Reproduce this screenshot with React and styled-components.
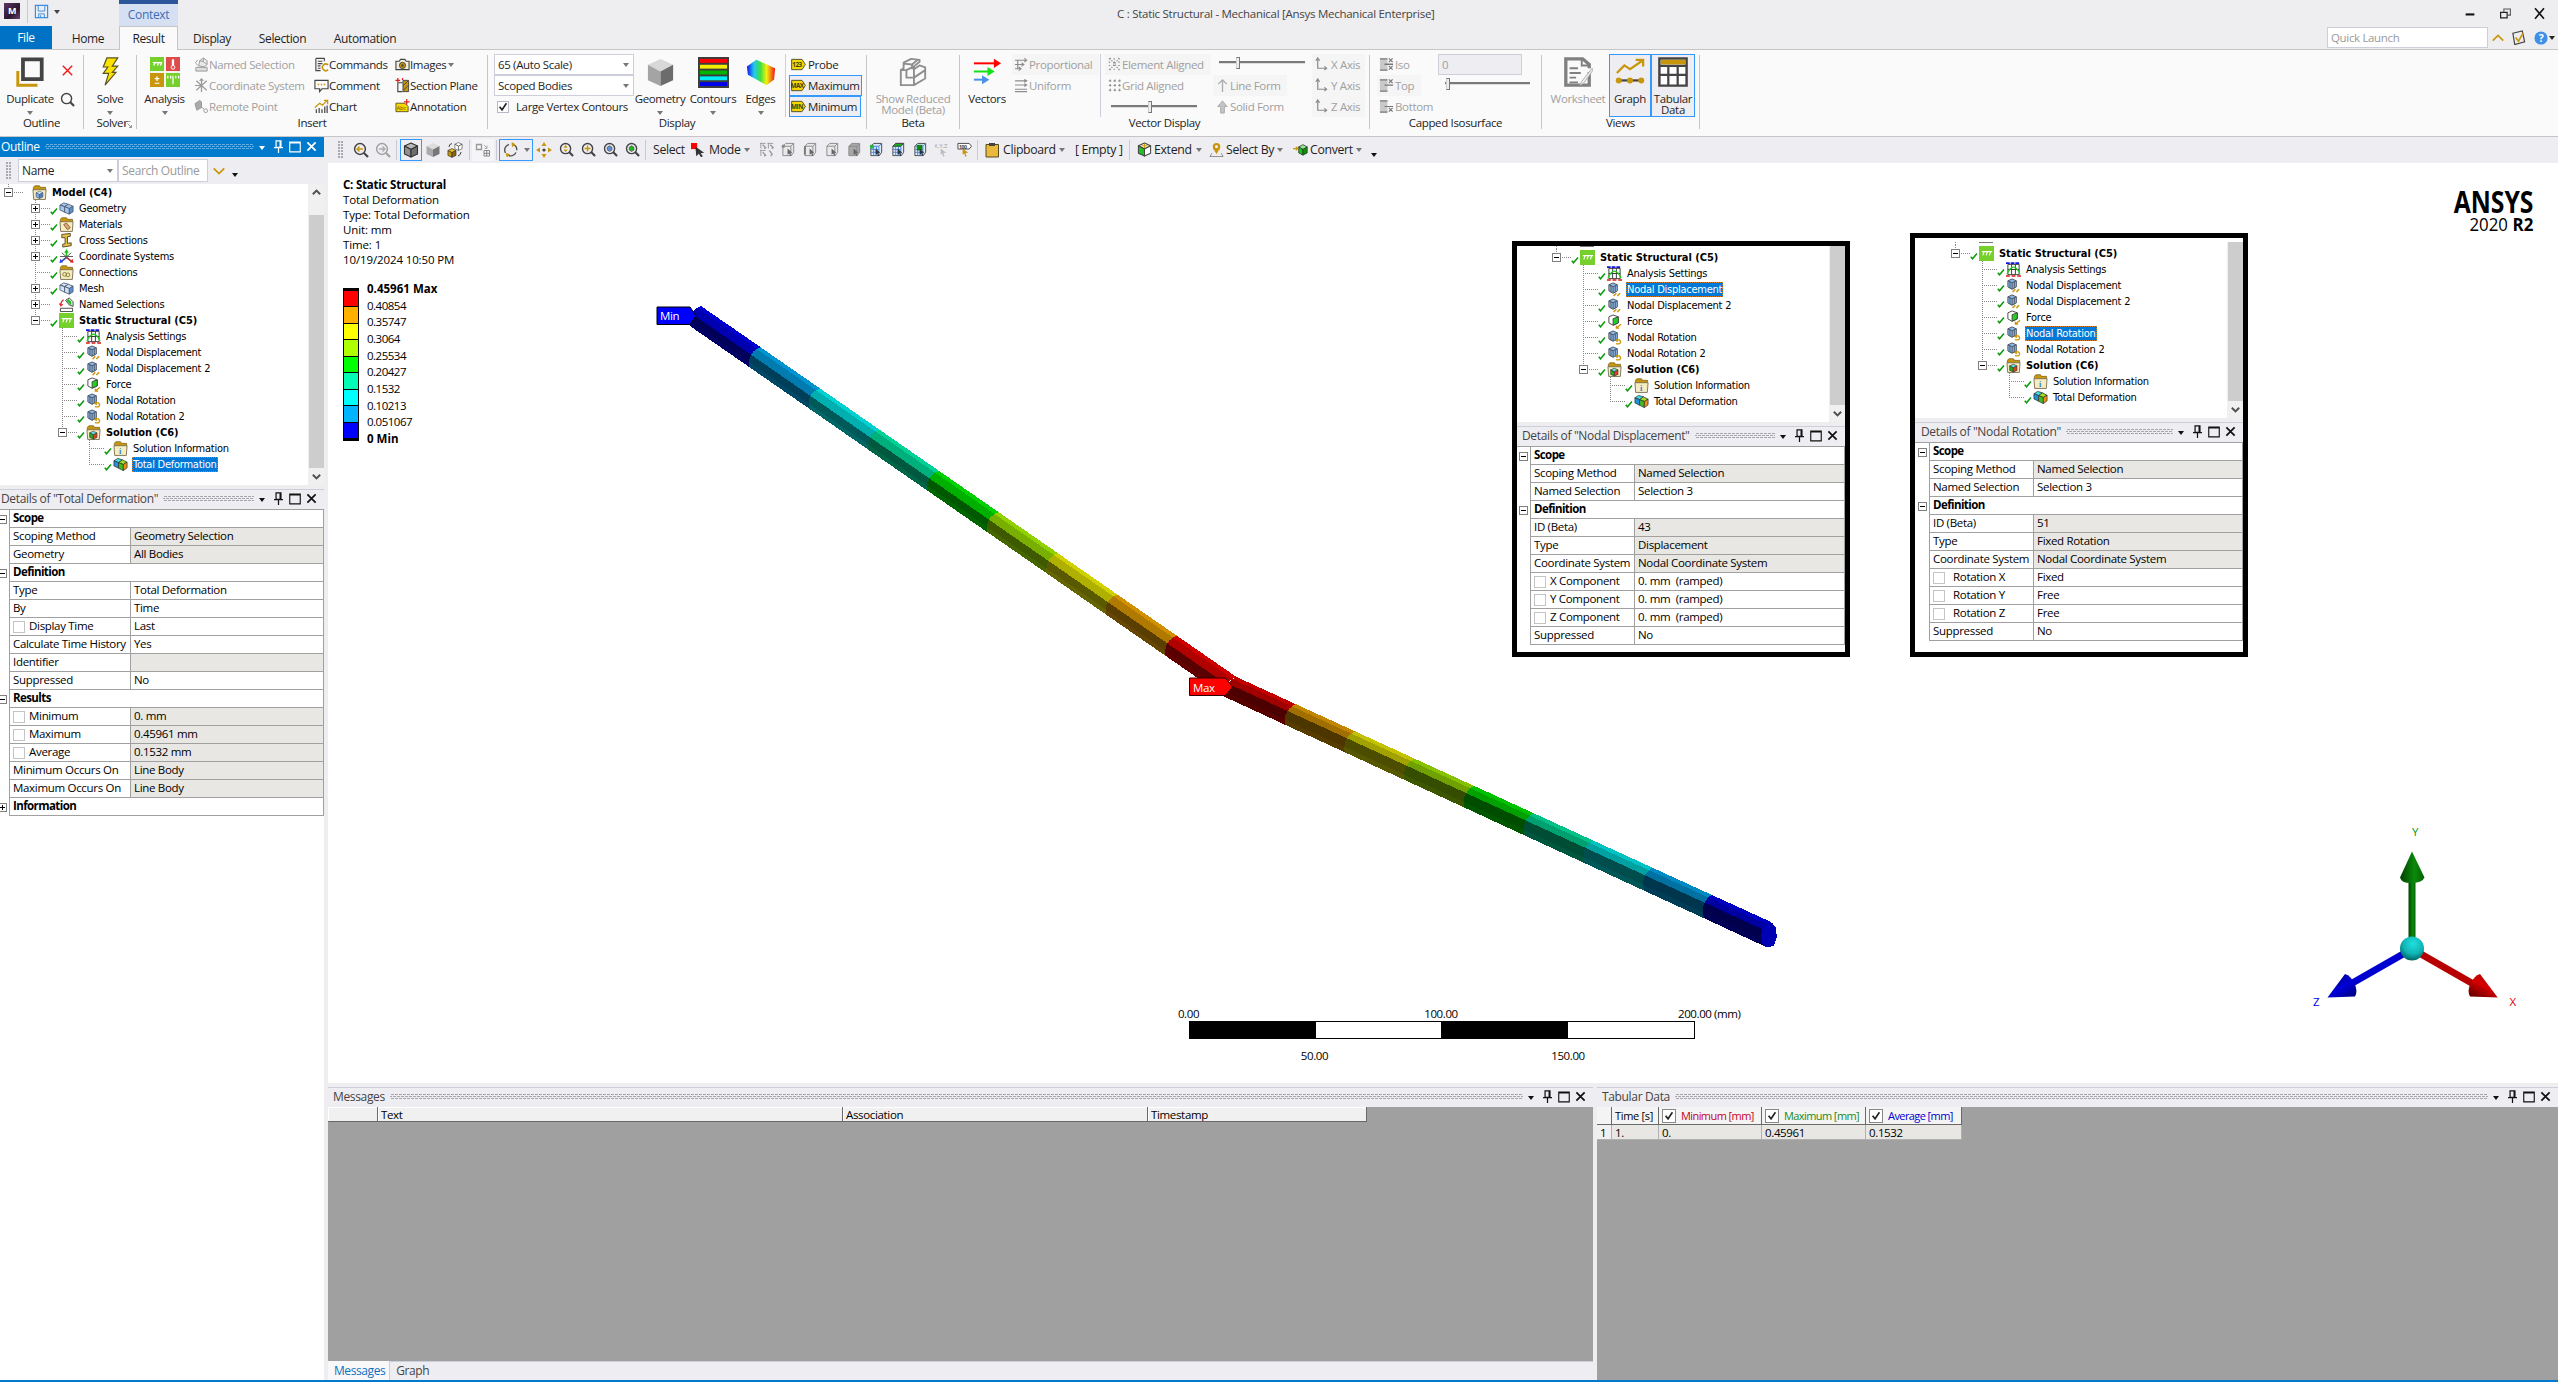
import React from "react";
import styled, { createGlobalStyle, css } from "styled-components";

/* ---------- base ---------- */
const Global = createGlobalStyle`
  *, *::before, *::after { box-sizing: border-box; }
  html, body { margin: 0; padding: 0; overflow: hidden; }
  body { font-family: "Open Sans", "Noto Sans", sans-serif; font-size: 11.5px; letter-spacing: -0.34px; color: #1e1e1e; background: #eeeef2; }
  svg { display: block; flex: none; }
`;
const G = "#c8960c";
const D = "#444444";
const L = "#8c8c8c";

const Window = styled.div`
  width: 2558px; height: 1382px; display: flex; flex-direction: column;
  background: #eeeef0; border-bottom: 2px solid #007acc; overflow: hidden; white-space: nowrap;
`;

/* ---------- icons ---------- */
const I = ({ s = 16, v = 16, children }) => (
  <svg width={s} height={s} viewBox={`0 0 ${v} ${v}`} fill="none">{children}</svg>
);
const Cube = ({ top = "#ddd", left = "#aaa", right = "#777", line = "none" }) => (
  <g stroke={line} strokeWidth="1.1" strokeLinejoin="round">
    <path d="M8 1 14.5 4 8 7.5 1.5 4z" fill={top} />
    <path d="M1.5 4 8 7.5V15L1.5 12z" fill={left} />
    <path d="M14.5 4 8 7.5V15l6.5-3z" fill={right} />
  </g>
);
const Lens = ({ c = D, children }) => (
  <>
    <circle cx="7" cy="7" r="5.4" stroke={c} strokeWidth="1.5" />
    <path d="m11 11 4 4" stroke={c} strokeWidth="2.2" />
    {children}
  </>
);
const Folder = ({ children }) => (
  <>
    <path d="M1.5 2.5 3 .8h5l1 1.7h5.5V6h-13z" fill="#c8960c" stroke="#7a6020" strokeWidth=".8" />
    <path d="M1 5h14l-.8 10.4H1.8z" fill="#f5ecc0" stroke="#7d7456" />
    {children}
  </>
);
const Mesh = ({ c }) => (
  <g stroke="#4a5a6e" strokeWidth=".9" fill={c} strokeLinejoin="round">
    <path d="M1 4.5 5 2l5 1.5L6 6z" /><path d="M1 4.5 6 6v6L1 9.5z" /><path d="M6 6l4-2.5 5 2L11 8z" />
    <path d="M6 6l5 2v6l-5-2z" /><path d="M15 5.5 11 8v6l4-2.5z" fill="#5f8fd0" />
  </g>
);
const NodeCube = () => (
  <g stroke="#46525f" strokeWidth="1">
    <path d="M2 3 6.5 1 11 3v6.5L6.500 12 2 9.500z" fill="#8fb8ea" /><path d="M2 3l4.500 2L11 3M6.500 5v7M4.200 4v7M8.800 4v7" />
  </g>
);
const SelCube = ({ face }) => (
  <>
    <path d="M2 4.500 5 1.500h8.500V11L11 14.500H2z" fill={face === "all" ? "#a8a8a8" : "#e9e9ec"} stroke="#8a8a8a" />
    <path d="M2 4.500h8.500v10M10.500 4.500l3-3" stroke="#8a8a8a" />
    {face === "dot" && <circle cx="2.500" cy="4.500" r="1.800" fill="#8a8a8a" />}
    {face === "edge" && <path d="M2 4.500v9" stroke="#777" strokeWidth="2" />}
    <path d="m7 7 5 4.500-2.200.2 1.200 2.600-1.200.5-1-2.600L7 13.500z" fill="#666" />
  </>
);
const SelMesh = ({ face }) => (
  <>
    <path d="M2 4.500 5 1.500h8.500V11L11 14.500H2z" fill="#dce9fb" stroke={D} />
    <path d="M2 4.500h8.500v10M10.500 4.500l3-3M2 8h8.500M2 11h8.500M5 4.500v10M8 4.500v10" stroke="#4a86d8" />
    {face === "node" && <rect x="1" y="3" width="4" height="4" fill="#2fae4e" />}
    {face === "face" && <path d="M2 4.500 5 1.500h8.500l-3 3z" fill="#12b512" stroke={D} />}
    {face === "body" && <rect x="4" y="3" width="6" height="6" fill="#128512" />}
    <path d="m7 7 5 4.500-2.200.2 1.200 2.600-1.200.5-1-2.600L7 13.500z" fill="#333" />
  </>
);
const Axes = () => (
  <path d="M4 2v10h9M2 4l2-3 2 3M11 10l2.500 2-2.500 2" stroke={L} strokeWidth="1.300" />
);
const Iso = ({ a, b }) => (
  <>
    <rect x="1" y="2" width="8" height="12" fill="#c9c9c9" />
    <path d="M1 2h8M1 14h8" stroke="#777" strokeWidth="1.500" />
    {a && <path d="m10.500 1.500 4 4m0-4-4 4M6 7.500h9" stroke="#777" strokeWidth="1.300" />}
    {b && <path d="m10.500 9.500 4 4m0-4-4 4M6 8h9" stroke="#777" strokeWidth="1.300" />}
  </>
);
const Tag = ({ text }) => (
  <>
    <path d="M.7 2.500h11l3.600 5.500-3.600 5.500H.7z" fill="#f5d800" stroke="#4a4a30" />
    <text x="6.400" y="10.800" fontSize="6.800" fontWeight="700" textAnchor="middle" fill="#3c3c14" letterSpacing="-.5">{text}</text>
  </>
);
const ICON = {
  save: <><path d="M1.500 1.500h13v13h-13z" stroke="#3c8ee0" strokeWidth="1.300" /><path d="M4.500 1.500v6h7v-6M5 14.500v-4h6v4M7 12v2" stroke="#3c8ee0" /></>,
  x: <path d="m3 3 10 10M13 3 3 13" stroke="#f01818" strokeWidth="1.500" />,
  lens: <Lens />,
  lensBack: <Lens><path d="M10 7H4m2.500-2.500L4 7l2.500 2.500" stroke={G} strokeWidth="1.400" /></Lens>,
  lensFwd: <Lens c="#a0a0a0"><path d="M4 7h6M7.500 4.500 10 7 7.500 9.500" stroke="#aaa" strokeWidth="1.400" /></Lens>,
  lensUD: <Lens><path d="M7 3 4.800 6h4.400zM7 11 4.800 8h4.400z" fill={G} /></Lens>,
  lensPlus: <Lens><path d="M7 3.800v6.400M3.800 7h6.400" stroke={G} strokeWidth="1.600" /></Lens>,
  lensCube: <Lens><path d="M4.500 5.500 7 4l2.500 1.500v3L7 10 4.500 8.500z" fill="#5e8fd8" stroke={D} strokeWidth=".7" /></Lens>,
  lensGreen: <Lens><path d="M4.500 5.500 7 4l2.500 1.500v3L7 10 4.500 8.500z" fill="#1cb81c" stroke={D} strokeWidth=".7" /></Lens>,
  named: <><path d="M2 11h12v4H2z" stroke="#999" fill="#ddd" /><path d="M5 9.500 6 4l4-3 4 3v4l-3 2.500zM10 1v4l4 3M6 4l4 1" stroke="#999" fill="#e8e8e8" /><path d="M4 3 1.500 6 4 9" stroke="#999" /></>,
  namedC: <><path d="M1.500 12h13v3.500h-13z" stroke={D} fill="#fff" /><path d="M7 3.500 11 1l4 4v5l-4-1.500z" stroke={D} fill="#e4f4e4" /><path d="m8 4 5 5V5L10 2z" fill="#22c022" /><path d="M5 3Q1.500 5 2 9m-1.500-2L2 9.500l2-2" stroke="#e02020" strokeWidth="1.200" /></>,
  coord: <path d="M8 1v14M1 8h6M2.500 3l11 10M13.500 3l-11 10M6 3l2-2 2 2" stroke="#999" strokeWidth="1.300" />,
  coordC: <><path d="M8 8V3" stroke="#18c018" strokeWidth="1.800" /><path d="M8 0 5.500 4h5z" fill="#18c018" /><path d="m8 9-5 4" stroke="#2040f0" strokeWidth="1.800" /><path d="m.5 15 1-4.500 3 3.500z" fill="#2040f0" /><path d="m8 9 5 4" stroke="#f02020" strokeWidth="1.800" /><path d="m15.500 15-1-4.500-3 3.500z" fill="#f02020" /><path d="m3 4 10 9M13 4 3 13M1 8h14" stroke="#555" /></>,
  remote: <><path d="M1 5 6 1.500 8 3v6l-5 3z" fill="#aaa" stroke="#999" /><circle cx="12.500" cy="12.500" r="2" stroke="#999" /><path d="m7 8 4 3" stroke="#999" /></>,
  commands: <><path d="M2 1.500h9v3M2 1.500V14.500h5M4 4.500h5M4 7h5M4 9.500h3M4 12h3" stroke={D} strokeWidth="1.200" /><path d="M15 8.500a3.500 3.500 0 1 0 0 5" stroke={G} strokeWidth="1.700" /></>,
  comment: <><path d="M1 2.500h14v9H8.500L6 14.500v-3H1z" stroke={D} strokeWidth="1.200" /><path d="M4 7h1.500M7.300 7h1.500M10.500 7H12" stroke={G} strokeWidth="1.500" /></>,
  chart: <><path d="M2.500 15v-4M5.500 15V9.500M8.500 15v-4M11.500 15V8M14 15V7" stroke={D} strokeWidth="1.300" /><path d="m1 9 5-4.500 3 2L13.500 2M10.500 1.500h4v4" stroke={G} strokeWidth="1.400" /></>,
  images: <><path d="M1 4.500h3.500l1.500-2h4.500l1.500 2H15v9H1z" stroke={D} strokeWidth="1.200" fill="#f3efe0" /><circle cx="8" cy="9" r="3.300" fill={G} stroke={D} /><circle cx="8" cy="9" r="1.300" fill={D} /></>,
  section: <><path d="M3 5v9.500h5M3 5h5" stroke={D} strokeWidth="1.200" /><path d="M8.500 2.500h6v12h-6z" fill={G} stroke={D} /><path d="m9 8 5-5M9 13l5-5" stroke={D} /><path d="M3 0v5M.5 2.500h5M8 0v2" stroke="#e02020" strokeWidth="1.300" /></>,
  annotation: <><path d="M1 4.500h9.500L14 8v5.500H1z" fill="#f5d800" stroke="#5e5620" /><text x="1.500" y="12" fontSize="6.500" fill="#6a5a00">Abc</text><path d="M12.500 0v6M9.500 3h6" stroke="#e02020" strokeWidth="1.300" /></>,
  probe: <Tag text="123" />, max: <Tag text="MAX" />, min: <Tag text="MIN" />,
  prop: <><path d="M1 3.500h12M1 8h9M1 12.500h6M11 1.500l2.500 2-2.500 2M8 6l2.500 2L8 10M5 10.500l2.500 2-2.500 2M4 3v10" stroke={L} strokeWidth="1.200" /></>,
  uniform: <path d="M1 3h13M1 7.500h13M1 12h13M1 14.500h13M11 1.500 13.500 3 11 4.500M11 6l2.500 1.500L11 9" stroke={L} strokeWidth="1.200" />,
  elem: <path d="M2 2h3M7 2h3M12 2h3M2 5.500h3M7 5.500h3M12 5.500h3M2 9h3M7 9h3M12 9h3M2 13h3M7 13h3M12 13h3M3 1l10 13M13 1 3 14" stroke={L} strokeDasharray="1.500 1.500" strokeWidth="1.200" />,
  grid: <path d="M2 3h13M2 8h13M2 13h13M3.500 1.500v13M8.500 1.500v13M13.500 1.500v13" stroke={L} strokeDasharray="2.500 2.500" strokeWidth="1.200" />,
  lineForm: <path d="M8 15V2M3.500 6.500 8 2l4.500 4.500" stroke="#aaa" strokeWidth="1.400" />,
  solidForm: <path d="M6 15V8H3l5-6 5 6h-3v7z" fill="#c4c4c4" stroke="#aaa" />,
  axis: <Axes />, iso: <Iso a b />, top: <Iso a />, bottom: <Iso b />,
  cubeLine: <Cube top="#b9b9b9" left="#8f8f8f" right="#6e6e6e" line="#333" />,
  cubeSolid: <Cube />,
  cubes: <><g transform="translate(0 6) scale(.62)"><Cube top="#f0c020" left="#c8960c" right="#8a6808" line="#333" /></g><g transform="translate(7 0) scale(.56)"><Cube top="#fff" left="#fff" right="#fff" line="#444" /></g><path d="M2 5q0-3 3-3.500M14 10q0 3-3 4" stroke={D} /></>,
  boxes: <><path d="M1.500 2.500h5v5h-5z" stroke="#999" strokeWidth="1.300" /><path d="M9 8.500h5.500v5.500H9zM11.700 8.500V14M9 11.300h5.500" stroke="#888" /><path d="M9 3l3 3m0-2.500V6.500H9.500" stroke="#aaa" /></>,
  rotate: <><path d="M2.500 11A6 6 0 0 1 6 2.300M10 2.300a6 6 0 0 1 3.800 6" stroke="#555" strokeWidth="1.400" /><path d="M13 10.500a6 6 0 0 1-8.500 2.500" stroke="#555" strokeWidth="1.400" /><path d="m9 .8 3 1.700-2.500 2zM4 14.800 3.500 11.500l3 1z" fill={G} stroke={G} /></>,
  pan: <g fill={G}><path d="m8 0 2.500 4h-5zM8 16l2.500-4h-5zM0 8l4-2.500v5zM16 8l-4-2.500v5z" /><circle cx="8" cy="8" r="1.600" fill={D} /></g>,
  mode: <><path d="M0 0h7v7H0z" fill="#f00" /><path d="m5 4 10 7-4 .6 2.500 3.600-2 1.200-2.500-4L6 15z" fill="#333" /></>,
  cursors: <g stroke="#999"><path d="M1 1.500h6M9 1.500h6M1 9h6M2 1v6M10 1v6M2 9v6" /><path d="m4 3 3 3-1.500 1M12 3l3 3-1.500 1M4 11l3 3-1.500 1M11 9l3 4-1.500 2" strokeWidth="1.500" /></g>,
  selV: <SelCube face="dot" />, selE: <SelCube face="edge" />, selF: <SelCube />, selB: <SelCube face="all" />,
  selN: <SelMesh face="node" />, selNF: <SelMesh face="face" />, selNB: <SelMesh face="body" />,
  xyz: <><text x="-1" y="6" fontSize="6.500" fill="#999" letterSpacing="0">X,Y,Z</text><path d="m6 7 6 4.500-3 .3 1.200 3.500-1.400.4-1-3.500L6 13.500z" fill="#bbb" /></>,
  tag100: <><path d="M1 1.500h12l2.500 3-2.500 3H1z" stroke={D} fill="#fff" /><text x="2" y="7" fontSize="5.500" fontWeight="700" fill={D}>100</text><path d="m6 7 6 4.500-3 .3 1.200 3.500-1.400.4-1-3.500L6 13.500z" fill={G} /></>,
  clipboard: <><path d="M2 2.500h12.500v12.500H2z" fill="#e8b93c" stroke="#5a4a20" /><path d="M5 1h6v3H5z" fill={D} /></>,
  extend: <><Cube top="#f6f2d8" left="#22c022" right="#fff" line="#444" /><path d="M8 1.500v5M5 4h6" stroke={G} /></>,
  selectBy: <><circle cx="8" cy="5" r="4" fill={G} /><path d="M4.500 7 8 13l3.500-6z" fill={G} /><circle cx="8" cy="5" r="1.500" fill="#fff" /><path d="m3 12-2 3.500h14L13 12" stroke="#888" /></>,
  convert: <><g transform="translate(5 2) scale(.7 .8)"><Cube top="#8ee88e" left="#11c811" right="#0a900a" line="#333" /></g><path d="M0 7h5M3 5l2 2-2 2" stroke={G} strokeWidth="1.300" /></>,
  check: <path d="m1.500 9.500 3.500 4L14 3" stroke="#0a9a0a" strokeWidth="3" />,
  model: <Folder><g transform="translate(3.500 6) scale(.56)"><Cube top="#cfe0f8" left="#7ea8e0" right="#4f7fc8" line="#456" /></g></Folder>,
  geometry: <Mesh c="#a8c8f0" />, mesh: <Mesh c="#d3e2f6" />,
  materials: <Folder><path d="m5 8 3-1.500 4 5-3 2z" fill="#e0a878" stroke="#94603a" /></Folder>,
  cross: <path d="M3 1.500 12 .5v3l-3 .5v7l4-.5v3l-9 1.500v-3l2.500-.5V5L3 5z" fill="#e6c050" stroke="#54481c" />,
  connections: <Folder><circle cx="6" cy="10" r="2" stroke="#8a7a30" /><circle cx="9.500" cy="10.500" r="2" stroke="#8a7a30" /></Folder>,
  static: <><path d="M0 0h16v16H0z" fill="#76d02c" /><path d="M3 6h11M5.500 6 4 10M9 6l-1.500 4M12.500 6 11 10" stroke="#fff" strokeWidth="1.200" /></>,
  settings: <><path d="M2 2.500h12v11H2zM6 2.500v11M10 2.500v11M2 8h12" stroke="#333" /><path d="M1 13Q8-2 15 13" stroke="#18d018" strokeWidth="1.300" /><path d="M0 1.200h4m1 0h4m1 0h4" stroke="#1414e0" strokeWidth="1.800" /><path d="M0 15h4m2 0h4m2 0h4" stroke="#e01414" strokeWidth="1.500" /></>,
  disp: <><NodeCube /><path d="m7 15 3-3m1 3 3-3" stroke={G} strokeWidth="1.600" /></>,
  force: <><path d="M2 3 6.500 1 12 3v6.500L6.500 12 2 9.500z" fill="#fff" stroke="#444" /><path d="M6.500 5 12 3v6.500L6.500 12z" fill="#22d022" stroke="#444" /><path d="m15 11-5 4m0-2.500V15h3" stroke={G} strokeWidth="1.400" /></>,
  rot: <><NodeCube /><path d="M9.500 14.500q5.500 1 5-2-.8-3-4.500-1.500m1.500-1.500L9.500 11l2 1.500" stroke={G} strokeWidth="1.400" /></>,
  solution: <Folder><g transform="translate(3 6) scale(.6)"><Cube top="#60e0e0" left="#20b020" right="#e04020" line="#333" /></g></Folder>,
  info: <Folder><text x="6.300" y="13.800" fontSize="9" fontWeight="700" fill="#3a80e0" fontFamily="Liberation Serif">i</text></Folder>,
  total: <g stroke="#333" strokeWidth=".8"><path d="M1 4 5 1.500 10 3 6 6z" fill="#40e0e0" /><path d="M1 4l5 2v6L1 9.500z" fill="#2090e0" /><path d="m6 6 4-3 5 2.500L11 8z" fill="#a0e020" /><path d="m6 6 5 2v6.500L6 12z" fill="#40c020" /><path d="M15 5.500 11 8v6.500l4-3z" fill="#f09010" /></g>,
  launcher: <path d="M1 1h10M1 1v10M5 5l8 8M13 8v5H8" stroke="#777" strokeWidth="1.500" />,
  // 32-unit icons
  duplicate: <><path d="M3 14v15h21" stroke={G} strokeWidth="3.200" transform="translate(0 1)" /><path d="M8.500 2.500h20v21h-20z" stroke={D} strokeWidth="4" /></>,
  solve: <path d="M12 1h12l-6 9h6l-6 7h4L10 31l4-13H8l5-7H8z" fill="#fbe200" stroke="#5a5420" strokeWidth="1.300" />,
  analysis: <><path d="M0 0h15v15H0z" fill="#76d02c" /><path d="M17 0h15v15H17z" fill="#dd4b4b" /><path d="M0 17h15v15H0z" fill={G} /><path d="M17 17h15v15H17z" fill="#76d02c" /><path d="M3 6h10M4 9l1.500-3M8 9l1.500-3M11 9l1.500-3M5 23h5M7.500 20.500v5M5 28h5M19 20v3m3-3v3M24.500 20v9m3-9v3m3-3v3" stroke="#fff" strokeWidth="1.300" /><circle cx="24.500" cy="11" r="2" stroke="#fff" /><path d="M24.500 9V2.500" stroke="#fff" strokeWidth="2.500" /></>,
  geomL: <g transform="scale(2)"><Cube top="#d8d8d8" left="#a4a4a4" right="#6c6c6c" /></g>,
  contours: <><path d="M0 0h32v32H0z" fill="#3d3d3d" /><path d="M2 2h28v4H2z" fill="#f00" /><path d="M2 8h28v4H2z" fill="#f4ee00" /><path d="M2 14h28v4H2z" fill="#00b400" /><path d="M2 20h28v4H2z" fill="#00eef4" /><path d="M2 26h28v4H2z" fill="#00e" /></>,
  edges: <><defs><linearGradient id="eg"><stop offset="0" stopColor="#1010f0" /><stop offset=".25" stopColor="#20c8f0" /><stop offset=".48" stopColor="#40e040" /><stop offset=".7" stopColor="#f4f010" /><stop offset=".88" stopColor="#f07010" /><stop offset="1" stopColor="#f01010" /></linearGradient></defs><path d="m1 10 10-7 20 9-1 12-8 6L2 19z" fill="url(#eg)" /></>,
  reduced: <path d="M3 14v16h14l12-7V11l-6-2-6 4v-3l6-5V3l-9-1-8 4v6zM3 14h6v8h8V13M17 30v-8l12-8M9 14l8-4M6 7l9 1 6-5M15 8v5" stroke="#8e8e8e" strokeWidth="2" strokeLinejoin="round" />,
  vectors: <><path d="M1 7h24" stroke="#f00" strokeWidth="2.200" /><path d="m23 2 8 5-8 5z" fill="#f00" /><path d="M1 16h17" stroke="#18e018" strokeWidth="2.200" /><path d="m16 11 8 5-8 5z" fill="#18e018" /><path d="M1 25h11" stroke="#4a90e8" strokeWidth="2.200" /><path d="m10 20 8 5-8 5z" fill="#4a90e8" /></>,
  worksheet: <><path d="M28 16v14H3V2h18l7 6v4" stroke="#808080" strokeWidth="3.500" /><path d="M20 2v7h7M7 12h9M7 17h12M7 22h7M7 27h9" stroke="#808080" strokeWidth="2" /><path d="m31 12-11 14-2 4 4-2 10-14z" fill="#eee" stroke="#aaa" /></>,
  graph: <><path d="m2 17 8-8 6 4L29 4M22 3h8v7" stroke={G} strokeWidth="2.400" /><path d="M2 25h28" stroke={D} strokeWidth="2.400" /><g fill={G}><circle cx="4" cy="25" r="3.200" /><circle cx="16" cy="25" r="3.200" /><circle cx="28" cy="25" r="3.200" /></g></>,
  tabular: <><path d="M1.500 1.500h29v29h-29z" fill="#fff" stroke={D} strokeWidth="2.600" /><path d="M3 3h26v5H3z" fill={G} /><path d="M1.500 9.500h29M1.500 19h29M11 9v21M21 9v21" stroke={D} strokeWidth="2.400" /></>,
  // window controls
  minus: <path d="M3 8.500h10" stroke="#111" strokeWidth="2.400" />,
  restore: <><path d="M2 6.500h8v7H2z" stroke="#222" strokeWidth="1.500" /><path d="M6 6V2.500h8V10h-4" stroke="#555" strokeWidth="1.300" /></>,
  close: <path d="m2.500 1.500 11 13m0-13-11 13" stroke="#111" strokeWidth="2" />,
  chevUp: <path d="m2 11 6-6 6 6" stroke={G} strokeWidth="2" />,
  chevDown: <path d="m2 5 6 6 6-6" stroke={G} strokeWidth="2" />,
  clipCheck: <><path d="m2 3.500 10-2.500 2.500 11.500L4 15.500z" stroke={D} strokeWidth="1.300" /><path d="m5 8 3 4 5-9" stroke={G} strokeWidth="1.700" /></>,
  help: <><circle cx="8" cy="8" r="7.500" fill="#3f8fe8" /><text x="8" y="12.200" textAnchor="middle" fontSize="12" fontWeight="700" fill="#fff">?</text></>,
};
const LARGE = ["duplicate", "solve", "analysis", "geomL", "contours", "edges", "reduced", "vectors", "worksheet", "graph", "tabular"];
const Icon = ({ n, s = 16 }) => <I s={s} v={LARGE.includes(n) ? 32 : 16}>{ICON[n]}</I>;
const Caret = styled.span`
  flex: none; width: 0; height: 0; border: 3px solid transparent; border-top: 4px solid ${p => p.$c || "#777"}; border-bottom: 0; margin: ${p => p.$m || 0};
`;

/* ---------- title bar and tabs ---------- */
const TitleBar = styled.header`height: 50px; flex: none; display: flex; background: #eeeef0; border-bottom: 1px solid #c6c6c6;`;
const TabsSide = styled.div`width: 420px; display: grid; grid-template-rows: 26px 24px;`;
const QuickRow = styled.div`display: flex; align-items: flex-start;`;
const QuickItems = styled.div`width: 85px; display: flex; align-items: center; height: 22px;`;
const AppLogo = styled.div`margin: 3px 7px 0 4px; width: 16px; height: 16px; background: linear-gradient(135deg, #5c3565, #2a1730 60%, #6a4474); color: #fff; font-weight: 700; font-size: 9px; line-height: 16px; text-align: center;`;
const VLine = styled.i`width: 1px; height: ${p => p.$h}px; background: #c9c9d6; flex: none; margin: ${p => p.$m || 0};`;
const ContextTab = styled.div`width: 59px; height: 26px; border-top: 4px solid #2b579a; background: #d5e0f3; color: #3e6db5; font-size: 12px; text-align: center; line-height: 22px;`;
const TabRow = styled.nav`display: flex; height: 24px;`;
const Tab = styled.div`
  width: ${p => p.$w}px; text-align: center; line-height: 26px; font-size: 12px; letter-spacing: -0.38px; padding-left: ${p => p.$l || 0}px;
  ${p => p.$file && css`background: #0072c6; color: #fff; line-height: 24px; height: 23px;`}
  ${p => p.$on && css`background: #fafafa; border: 1px solid #c6c6c6; border-bottom: 0; line-height: 24px;`}
`;
const Title = styled.h1`flex: 1; margin: 0; padding: 5px 0 0 697px; font-size: 11.5px; font-weight: 400; color: #444; letter-spacing: -0.27px; line-height: 17px;`;
const WinSide = styled.div`width: 231px; display: flex; flex-direction: column;`;
const WinButtons = styled.div`height: 27px; display: flex; justify-content: flex-end; align-items: center; gap: 21.5px; padding: 0 12px 0 0;`;
const QuickLaunch = styled.div`display: flex; align-items: center; gap: 3px;`;
const RightIcons = styled.div`display: flex; align-items: center; gap: 8px; margin-left: 3px;`;
const SearchBox = styled.div`width: ${p => p.$w}px; height: ${p => p.$h}px; border: 1px solid #cccedb; background: #fff; color: #9a9a9a; padding-left: 3px; line-height: ${p => p.$h - 2}px;`;

/* ---------- ribbon ---------- */
const RibbonBar = styled.section`height: 87px; flex: none; display: flex; background: #fafafa; border-bottom: 1px solid #c6c6c6;`;
const GroupBox = styled.div`width: ${p => p.$w}px; height: 86px; padding-top: 4px; border-right: 1px solid transparent; border-image: linear-gradient(transparent 6px, #c6c6c6 6px, #c6c6c6 78px, transparent 78px) 1; flex: none;`;
const GroupBody = styled.div`height: 63px; display: flex; align-items: stretch;`;
const GroupLabel = styled.div`height: 12px; line-height: 12px; text-align: center; color: #222; display: flex; justify-content: center; align-items: center; padding-left: ${p => (p.$shift ? 9 : 0)}px;`;
const LauncherSlot = styled.span`margin: 3px 0 0 -3px;`;
const Group = ({ w, label, children, launcher }) => (
  <GroupBox $w={w}>
    <GroupBody>{children}</GroupBody>
    <GroupLabel $shift={launcher}>{label}{launcher && <LauncherSlot><Icon n="launcher" s={8} /></LauncherSlot>}</GroupLabel>
  </GroupBox>
);
const BigBtn = styled.button`
  all: unset; box-sizing: border-box; width: ${p => p.$w}px; margin-left: ${p => p.$l || 0}px; height: 63px; display: flex; flex-direction: column; align-items: center;
  color: ${p => (p.$off ? "#a0a0a0" : "#1e1e1e")}; line-height: 11px; text-align: center; white-space: pre; padding-top: 1px;
  ${p => p.$on && css`background: #eeeef2; outline: 1.500px solid #3399ff; outline-offset: -1px;`}
  & > svg { margin: 2px 0 ${p => 36 - p.$s}px; }
`;
const Big = ({ w, l, icon, label, caret, off, on, s = 30 }) => (
  <BigBtn $w={w} $l={l} $off={off} $on={on} $s={s}><Icon n={icon} s={s} />{label}{caret && <Caret $m="7px 0 0" />}</BigBtn>
);
const Col = styled.div`width: ${p => p.$w}px; display: flex; flex-direction: column; flex: none; padding-top: ${p => p.$t || 0}px;`;
const ItemBox = styled.div`
  height: 21px; display: flex; align-items: center; gap: ${p => p.$gap || 0}px; padding-left: 2px; width: ${p => (p.$w ? p.$w + "px" : "auto")};
  color: ${p => (p.$off ? "#a0a0a0" : "#1e1e1e")};
  ${p => p.$hover && css`background: #f5f5f5;`}
  ${p => p.$on && css`background: #eeeef2; outline: 1.500px solid #3399ff; outline-offset: -1px;`}
`;
const Item = ({ icon, label, caret, ...p }) => (
  <ItemBox $off={p.off} $on={p.on} $w={p.w} $hover={p.hover} $gap={p.gap}><Icon n={icon} s={15} />{label}{caret && <Caret $m="0 0 0 2px" />}</ItemBox>
);
const Select = styled.div`
  height: ${p => p.$h || 21}px; width: ${p => p.$w}px; border: 1px solid #cccedb; background: ${p => (p.$off ? "#eeeef2" : "#fff")}; color: ${p => (p.$off ? "#a0a0a0" : "#1e1e1e")};
  display: flex; align-items: center; justify-content: space-between; padding: 0 4px 0 3px;
`;
const SelectWrap = styled.div`padding-left: 6px;`;
const IsoWrap = styled.div`padding-left: 7px;`;
const CheckRow = styled.label`height: 21px; display: flex; align-items: center; gap: 7px; padding-left: 3px; letter-spacing: -0.38px;`;
const CheckBox = styled.span`width: 12px; height: 12px; border: 1px solid #b8b8c4; background: #fff; display: inline-flex; align-items: center; justify-content: center; flex: none;`;
const Tick = () => <I s={10}><path d="m2.500 7.500 4 5L13.500 2" stroke="#222" strokeWidth="2.600" /></I>;
const SliderBox = styled.div`width: ${p => p.$w}px; height: 21px; display: flex; align-items: center; margin: ${p => p.$m || 0};`;
const Track = styled.div`flex: ${p => p.$f}; height: 3px; border-top: 2px solid #7a7a7a; border-bottom: 1px solid #ddd;`;
const Thumb = styled.div`width: 4px; height: 12px; border: 1px solid #777; border-left-color: #ccc; background: #eee;`;
const Slider = ({ w, a, b, m }) => <SliderBox $w={w} $m={m}><Track $f={a} /><Thumb /><Track $f={b} /></SliderBox>;
const InnerLine = styled.i`width: 1px; height: 63px; background: #cccedb; margin: ${p => p.$m || 0};`;

const Ribbon = () => (
  <RibbonBar>
    <Group w={84} label="Outline">
      <Big w={60} icon="duplicate" label="Duplicate" caret />
      <Col $w={20} $t={9}><Icon n="x" s={15} /><Col $w={16} $t={14}><Icon n="lens" s={15} /></Col></Col>
    </Group>
    <Group w={53} label="Solver" launcher><Big w={54} icon="solve" label="Solve" caret s={29} /></Group>
    <Group w={351} label="Insert">
      <Big w={55} icon="analysis" label="Analysis" caret />
      <Col $w={120}>
        <Item icon="named" label="Named Selection" off /><Item icon="coord" label="Coordinate System" off /><Item icon="remote" label="Remote Point" off />
      </Col>
      <Col $w={81}>
        <Item icon="commands" label="Commands" /><Item icon="comment" label="Comment" /><Item icon="chart" label="Chart" />
      </Col>
      <Col $w={90}>
        <Item icon="images" label="Images" caret /><Item icon="section" label="Section Plane" /><Item icon="annotation" label="Annotation" />
      </Col>
    </Group>
    <Group w={379} label="Display">
      <Col $w={146}>
        <SelectWrap>
          <Select $w={140}>65 (Auto Scale)<Caret /></Select><Select $w={140}>Scoped Bodies<Caret /></Select>
          <CheckRow><CheckBox><Tick /></CheckBox>Large Vertex Contours</CheckRow>
        </SelectWrap>
      </Col>
      <Big w={52} icon="geomL" label="Geometry" caret s={31} />
      <Big w={54} icon="contours" label="Contours" caret s={31} />
      <Big w={41} icon="edges" label="Edges" caret />
      <InnerLine $m="0 3px 0 4px" />
      <Col $w={74}>
        <Item icon="probe" label="Probe" w={72} gap={2} /><Item icon="max" label="Maximum" w={73} gap={2} on /><Item icon="min" label="Minimum" w={72} gap={2} on />
      </Col>
    </Group>
    <Group w={93} label="Beta"><Big w={92} icon="reduced" label={"Show Reduced\nModel (Beta)"} off /></Group>
    <Group w={410} label="Vector Display">
      <Big w={50} l={2} icon="vectors" label="Vectors" s={29} />
      <Col $w={88}><Item icon="prop" label="Proportional" off hover w={87} /><Item icon="uniform" label="Uniform" off /></Col>
      <InnerLine $m="0 4px 0 0" />
      <Col $w={108}>
        <Item icon="elem" label="Element Aligned" off hover w={106} /><Item icon="grid" label="Grid Aligned" off />
        <Slider w={86} a={38} b={46} m="0 0 0 6px" />
      </Col>
      <Col $w={99}>
        <Slider w={86} a={17} b={65} m="-2px 0 2px 6px" />
        <Item icon="lineForm" label="Line Form" off hover w={74} /><Item icon="solidForm" label="Solid Form" off />
      </Col>
      <Col $w={53}>
        <Item icon="axis" label="X Axis" off hover gap={2} /><Item icon="axis" label="Y Axis" off hover gap={2} /><Item icon="axis" label="Z Axis" off hover gap={2} />
      </Col>
    </Group>
    <Group w={172} label="Capped Isosurface">
      <Col $w={68}>
        <IsoWrap><Item icon="iso" label="Iso" off gap={1} /><Item icon="top" label="Top" off hover w={44} gap={1} /><Item icon="bottom" label="Bottom" off gap={1} /></IsoWrap>
      </Col>
      <Col $w={90}>
        <Select $w={84} $off>0</Select><Slider w={85} a={1} b={80} m="-2px 0 0 7px" />
      </Col>
    </Group>
    <Group w={158} label="Views">
      <Big w={62} l={5} icon="worksheet" label="Worksheet" off />
      <Big w={42} icon="graph" label="Graph" on />
      <Big w={44} icon="tabular" label={"Tabular\nData"} on />
    </Group>
  </RibbonBar>
);

/* ---------- docked panels ---------- */
const Workspace = styled.div`flex: 1; min-height: 0; display: grid; grid-template-columns: 324px 2230px; column-gap: 4px;`;
const SideColumn = styled.aside`display: flex; flex-direction: column; min-height: 0; background: #fff;`;
const Header = styled.div`
  height: ${p => p.$h || 20}px; flex: none; display: flex; align-items: center; padding: 0 4px ${p => (p.$h ? 3 : 2)}px ${p => p.$l ?? 1}px; font-size: 12px; letter-spacing: -0.34px;
  background: ${p => (p.$active ? "#007acc" : "#eeeef2")}; color: ${p => (p.$active ? "#fff" : "#444")};
  border-top: 1px solid ${p => (p.$active ? "#007acc" : "#cccedb")};
`;
const Dots = styled.i`
  flex: 1; height: 5px; margin: 0 0 0 5px; --c: ${p => (p.$active ? "#62b0e4" : "#a6a6ac")};
  background-image: conic-gradient(from 90deg at 1px 1px, transparent 270deg, var(--c) 0), conic-gradient(from 90deg at 1px 1px, transparent 270deg, var(--c) 0);
  background-size: 4px 4px; background-position: 0 0, 2px 2px;
`;
const HeadIcons = styled.div`display: grid; grid-template-columns: repeat(4, 16.500px); place-items: center;`;
const PanelHeader = ({ title, active, l, h }) => {
  const c = active ? "#fff" : "#111";
  return (
    <Header $active={active} $l={l} $h={h}>
      {title}<Dots $active={active} />
      <HeadIcons>
        <Caret $c={c} $m="2px 0 0" />
        <I s={13}><path d="M5 1h6v8H5zM2.500 9.500h11M8 10v6M10 1v8" stroke={c} strokeWidth="1.500" /></I>
        <I s={12}><path d="M1 1.500h14v13H1zM1 2.500h14" stroke={c} strokeWidth="1.500" /></I>
        <I s={11}><path d="m2 2 12 12M14 2 2 14" stroke={c} strokeWidth="2.500" /></I>
      </HeadIcons>
    </Header>
  );
};
const FilterBar = styled.div`height: 27px; flex: none; display: flex; align-items: center; background: #eeeef2; padding: 0 0 0 6px; font-size: 12px;`;
const FilterEnd = styled.div`display: flex; align-items: center; margin-left: 4px;`;
const Grip = styled.i`width: 5px; height: 18px; background: radial-gradient(circle at 1px 1px, #a8a8b0 0.800px, transparent 1px) 0 0 / 3px 3px; flex: none; margin: ${p => p.$m || 0};`;
const Gap = styled.div`height: 4px; flex: none; background: #eeeef0;`;

/* ---------- tree ---------- */
const TreeBox = styled.div`display: flex; height: ${p => p.$h}px; flex: none; background: #fff; font-family: "DejaVu Sans Condensed", "DejaVu Sans", sans-serif; font-size: 11px; letter-spacing: -0.25px; color: #000; overflow: hidden;`;
const Rows = styled.div`flex: 1; padding-left: ${p => p.$l || 0}px; overflow: hidden;`;
const RowBox = styled.div`height: 16px; display: flex; align-items: center; padding-left: ${p => p.$lv * 27}px;`;
const dotV = "repeating-linear-gradient(#888 0 1px, transparent 1px 2px)";
const dotH = "repeating-linear-gradient(90deg, #888 0 1px, transparent 1px 2px)";
const Stem = styled.span`
  width: 23px; height: 16px; flex: none; display: flex; align-items: center; padding-left: 4px;
  background: ${dotV} 8px 0 / 1px ${p => (p.$last ? 8 : 16)}px no-repeat, ${dotH} 8px 8px / 15px 1px no-repeat;
`;
const ClippedRow = styled.div`
  height: 3px; margin-left: 27px; background: ${dotV} 8px 0 / 1px 3px no-repeat, linear-gradient(#777, #777) 32px 0 / 14px 1px no-repeat;
`;
const Expander = styled.span`
  width: 9px; height: 9px; border: 1px solid #808080; flex: none;
  background: linear-gradient(#000, #000) center / 5px 1px no-repeat ${p => (p.$plus ? ", linear-gradient(#000, #000) center / 1px 5px no-repeat" : "")}, #fff;
`;
const CheckSlot = styled.span`width: 9px; padding-top: 5px; flex: none;`;
const TreeLabel = styled.span`
  line-height: 15px; margin-left: 4px; padding: 0 1px;
  ${p => (p.$b ? css`font-weight: 700; letter-spacing: -0.03px;` : "")}
  ${p => (p.$sel ? css`background: #0078d7; color: #fff; outline: 1px dotted #d87a1c; outline-offset: -1px;` : "")}
`;
const Row = ({ d, sel }) => {
  const [lv, icon, label, ex, bold, nocheck, last] = d;
  return (
    <RowBox $lv={lv}>
      <Stem $last={last}>{ex && <Expander $plus={ex === "+"} />}</Stem>
      <CheckSlot>{!nocheck && <Icon n="check" s={8} />}</CheckSlot>
      <Icon n={icon} s={15} />
      <TreeLabel $b={bold} $sel={sel}>{label}</TreeLabel>
    </RowBox>
  );
};
const ANALYSIS = [
  [1, "static", "Static Structural (C5)", "-", true, false, true],
  [2, "settings", "Analysis Settings"], [2, "disp", "Nodal Displacement"], [2, "disp", "Nodal Displacement 2"],
  [2, "force", "Force"], [2, "rot", "Nodal Rotation"], [2, "rot", "Nodal Rotation 2"],
  [2, "solution", "Solution (C6)", "-", true, false, true],
  [3, "info", "Solution Information"], [3, "total", "Total Deformation", null, false, false, true],
];
const MODEL = [
  [0, "model", "Model (C4)", "-", true, true, true],
  [1, "geometry", "Geometry", "+"], [1, "materials", "Materials", "+"], [1, "cross", "Cross Sections", "+"],
  [1, "coordC", "Coordinate Systems", "+"], [1, "connections", "Connections"], [1, "mesh", "Mesh", "+"],
  [1, "namedC", "Named Selections", "+", false, true], ...ANALYSIS,
];
const Scroll = styled.div`width: 16px; background: #f0f0f0; display: flex; flex-direction: column; align-items: center; flex: none;`;
const ScrollArrow = styled.div`height: 17px; width: 16px; margin-bottom: ${p => p.$mb || 0}px; display: flex; align-items: center; justify-content: center;`;
const ScrollThumb = styled.div`width: 15px; height: ${p => p.$h}px; background: #cdcdcd;`;
const Chev = ({ up }) => <I s={9}><path d={up ? "m1.500 11 6.500-6.500 6.500 6.500" : "m1.500 5 6.500 6.500L14.500 5"} stroke="#505050" strokeWidth="3.500" /></I>;

/* ---------- details grid ---------- */
const Grid = styled.div`display: grid; grid-template-columns: ${p => p.$g}px ${p => p.$n}px 1fr; flex: none; border-top: 1px solid #a0a0a0; color: #000; letter-spacing: -0.31px; background: #fff; margin-top: -1px;`;
const Gutter = styled.div`height: 18px; display: flex; align-items: center; justify-content: flex-end; padding-right: 2px; overflow: hidden; border-right: 1px solid #a0a0a0;`;
const Cell = styled.div`
  height: 18px; line-height: 15px; padding: 0 0 2px 3px; border-right: 1px solid #a0a0a0; border-bottom: 1px solid #a0a0a0; overflow: hidden; display: flex; align-items: center; white-space: pre;
  ${p => (p.$head ? css`grid-column: 2 / 4; font-weight: 700; letter-spacing: -0.58px;` : "")}
  ${p => (p.$ro ? css`background: #e8e7e3;` : "")}
`;
const CellCheck = styled.i`width: 12px; height: 12px; border: 1px solid #c4c4c4; background: #fff; margin: 2px ${p => p.$r || 4}px 0 0;`;
const Details = ({ g, n, rows, gap }) => (
  <Grid $g={g} $n={n}>
    {rows.map(([name, val, o = ""], i) => (
      val === undefined || val === "+"
        ? <React.Fragment key={i}><Gutter><Expander $plus={val === "+"} /></Gutter><Cell $head>{name}</Cell></React.Fragment>
        : <React.Fragment key={i}><Gutter /><Cell>{o.includes("c") && <CellCheck $r={gap} />}{name}</Cell><Cell $ro={o.includes("r")}>{val}</Cell></React.Fragment>
    ))}
  </Grid>
);
const MAIN_ROWS = [
  ["Scope"], ["Scoping Method", "Geometry Selection", "r"], ["Geometry", "All Bodies", "r"],
  ["Definition"], ["Type", "Total Deformation"], ["By", "Time"], ["Display Time", "Last", "c"], ["Calculate Time History", "Yes"], ["Identifier", "", "r"], ["Suppressed", "No"],
  ["Results"], ["Minimum", "0. mm", "cr"], ["Maximum", "0.45961 mm", "cr"], ["Average", "0.1532 mm", "cr"], ["Minimum Occurs On", "Line Body", "r"], ["Maximum Occurs On", "Line Body", "r"],
  ["Information", "+"],
];
const DISP_ROWS = [
  ["Scope"], ["Scoping Method", "Named Selection", "r"], ["Named Selection", "Selection 3"],
  ["Definition"], ["ID (Beta)", "43", "r"], ["Type", "Displacement", "r"], ["Coordinate System", "Nodal Coordinate System", "r"],
  ["X Component", "0. mm  (ramped)", "c"], ["Y Component", "0. mm  (ramped)", "c"], ["Z Component", "0. mm  (ramped)", "c"], ["Suppressed", "No"],
];
const ROT_ROWS = [
  ["Scope"], ["Scoping Method", "Named Selection", "r"], ["Named Selection", "Selection 3"],
  ["Definition"], ["ID (Beta)", "51", "r"], ["Type", "Fixed Rotation", "r"], ["Coordinate System", "Nodal Coordinate System", "r"],
  ["Rotation X", "Fixed", "c"], ["Rotation Y", "Free", "c"], ["Rotation Z", "Free", "c"], ["Suppressed", "No"],
];

/* ---------- graphics toolbar ---------- */
const ToolStrip = styled.div`height: 26px; flex: none; display: flex; align-items: center; background: #eeeef2; font-size: 12.300px; letter-spacing: -0.34px; padding-bottom: 1px;`;
const Slot = styled.div`
  width: ${p => p.$w || 22}px; height: 22px; display: flex; align-items: center; justify-content: ${p => p.$j || "center"}; gap: 5px; flex: none; margin-left: ${p => p.$l || 0}px;
  ${p => p.$box && css`border: 1.500px solid #3399ff;`} ${p => p.$hover && css`background: #f5f5f7;`}
`;
const Sep = () => <Slot $w={5}><VLine $h={20} /></Slot>;
const SELECTION_TOOLS = ["cursors", "selV", "selE", "selF", "selB", "selN", "selNF", "selNB", "xyz", "tag100"];
const Tools = () => (
  <ToolStrip>
    <Grip $m="0 6px 0 10px" />
    <Slot $l={1}><Icon n="lensBack" /></Slot><Slot><Icon n="lensFwd" /></Slot><Sep />
    <Slot $box $l={1}><Icon n="cubeLine" /></Slot><Slot $w={21}><Icon n="cubeSolid" /></Slot><Slot $w={24}><Icon n="cubes" /></Slot><Sep />
    <Slot $hover><Icon n="boxes" /></Slot><Sep />
    <Slot $box $w={34}><Icon n="rotate" /><Caret /></Slot>
    <Slot><Icon n="pan" /></Slot><Slot><Icon n="lensUD" s={15} /></Slot><Slot><Icon n="lensPlus" s={15} /></Slot><Slot><Icon n="lensCube" s={15} /></Slot><Slot><Icon n="lensGreen" s={15} /></Slot><Sep />
    <Slot $w={42} $j="flex-start" $l={5}>Select</Slot>
    <Slot $w={14} $l={-4}><Icon n="mode" s={14} /></Slot>
    <Slot $w={46} $l={4} $j="flex-start">Mode<Caret $m="0 0 0 -2px" /></Slot>
    {SELECTION_TOOLS.map(n => <Slot key={n}><Icon n={n} s={15} /></Slot>)}
    <Sep />
    <Slot $w={18} $l={3}><Icon n="clipboard" /></Slot><Slot $w={72} $l={2} $j="flex-start">Clipboard<Caret $m="0 0 0 -2px" /></Slot>
    <Slot $w={52} $j="flex-start">[ Empty ]</Slot><Sep />
    <Slot $w={18} $l={3}><Icon n="extend" s={15} /></Slot><Slot $w={50} $l={1} $j="flex-start">Extend<Caret $m="0 0 0 -1px" /></Slot>
    <Slot $w={18} $l={3}><Icon n="selectBy" s={15} /></Slot><Slot $w={65} $l={1} $j="flex-start">Select By<Caret $m="0 0 0 -2px" /></Slot>
    <Slot $w={18}><Icon n="convert" s={15} /></Slot><Slot $w={58} $l={1} $j="flex-start">Convert<Caret $m="0 0 0 -2px" /></Slot>
    <Caret $c="#111" $m="10px 0 0 3px" />
  </ToolStrip>
);

/* ---------- viewport ---------- */
const MainColumn = styled.main`display: flex; flex-direction: column; min-height: 0;`;
const Viewport = styled.div`height: 920px; flex: none; background: #fff; position: relative; overflow: hidden; color: #000;`;
const Scene = styled.svg`position: absolute; inset: 0; font-size: 11.5px; letter-spacing: -0.4px;`;
const Caption = styled.div`padding: 14px 0 0 15px; line-height: 15px; letter-spacing: -0.12px; & > b { letter-spacing: -0.22px; }`;
const Legend = styled.div`display: flex; margin: 14px 0 0 15px; gap: 8px;`;
const Swatches = styled.div`width: 16px; height: 153px; margin-top: 7px; border: 1px solid #000; border-width: 3px 1px 3px; display: flex; flex-direction: column;`;
const Swatch = styled.i`flex: 1; background: ${p => p.$c}; & + & { border-top: 1px solid #000; }`;
const LegendLabels = styled.div`display: grid; grid-template-rows: repeat(10, 16.670px); line-height: 15.500px; letter-spacing: -0.5px; & > b { letter-spacing: 0.02px; }`;
const Brand = styled.div`position: absolute; right: 25px; top: 23px; display: flex; flex-direction: column; align-items: flex-end; letter-spacing: 0;`;
const BrandName = styled.b`font-size: 30.500px; line-height: 30px; height: 27px; transform: scaleX(0.810); transform-origin: right;`;
const BrandVersion = styled.span`font-size: 18px; line-height: 18px; margin-top: 2px; transform: scaleX(0.935); transform-origin: right; display: flex; gap: 5px;`;
const Inset = styled.section`position: absolute; left: ${p => p.$x}px; top: ${p => p.$y}px; width: 338px; height: ${p => p.$h}px; border: 5px solid #000; background: #fff; display: flex; flex-direction: column; padding-top: ${p => p.$pt || 0}px;`;

const mul = (h, f) => `rgb(${[1, 3, 5].map(i => Math.round(parseInt(h.slice(i, i + 2), 16) * f)).join(",")})`;
const SCALE = ["#0000ff", "#00b4ff", "#00ffff", "#00ffb4", "#00ff00", "#b0ff00", "#ffff00", "#ffb000", "#ff0000"];
const lerp = (a, b, t) => [a[0] + (b[0] - a[0]) * t, a[1] + (b[1] - a[1]) * t];
const beam = (t0, t1, b0, b1, colors, bands, shift) => {
  const at = (i, t) => {
    const p = lerp(lerp(t0, t1, i / 9), lerp(b0, b1, i / 9), t);
    const k = 4 * t * (1 - t);
    return [p[0] + shift[0] * k, p[1] + shift[1] * k];
  };
  return colors.flatMap((c, i) => bands.map(([a, b, f]) => {
    const m = (a + b) / 2;
    const pts = [at(i, a), at(i, m), at(i, b), at(i + 1, b), at(i + 1, m), at(i + 1, a)];
    return <polygon key={i + "-" + a} points={pts.map(p => p.map(v => v.toFixed(1)).join(",")).join(" ")} fill={mul(c, f)} />;
  }));
};
const Model = () => (
  <g shapeRendering="crispEdges">
    <path d="m1763 926 10-3 1 20-8 4-8-4-3-8z" fill="#00004d" />
    {beam([701, 306], [1236.500, 677], [690, 326], [1225, 697], SCALE, [[0, 0.160, 0.820], [0.160, 0.500, 0.690], [0.500, 0.820, 0.350], [0.820, 1, 0.400]], [-4, -2.500])}
    {beam([1236.500, 677], [1771, 922], [1225, 697], [1764, 946], [...SCALE].reverse(), [[0, 0.160, 0.760], [0.160, 0.420, 0.630], [0.420, 0.800, 0.300], [0.800, 1, 0.340]], [-4, -2])}
    <path d="M1769 921l7 6.500.8 10-3 8-6 2-5-2-1.500-9 .5-8z" fill="#0000b4" />
  </g>
);
const Triad = () => (
  <g transform="translate(-1 -.5)">
    <defs>
      <linearGradient id="gy"><stop offset="0" stopColor="#024002" /><stop offset=".6" stopColor="#0a8a0a" /><stop offset="1" stopColor="#056005" /></linearGradient>
      <radialGradient id="gs" cx=".55" cy=".3" r=".7"><stop offset="0" stopColor="#20e0e0" /><stop offset=".6" stopColor="#10b4b4" /><stop offset="1" stopColor="#066" /></radialGradient>
      <linearGradient id="gx" x1="0" y1="1" x2=".7" y2="0"><stop offset="0" stopColor="#500000" /><stop offset=".6" stopColor="#d80000" /><stop offset="1" stopColor="#a00000" /></linearGradient>
      <linearGradient id="gz" x1="1" y1="1" x2=".2" y2="0"><stop offset="0" stopColor="#000070" /><stop offset=".5" stopColor="#0000d8" /><stop offset="1" stopColor="#000080" /></linearGradient>
    </defs>
    <path d="M2409.500 878h7v62h-7z" fill="url(#gy)" />
    <path d="M2413 852l12.500 26q-2 5-12.500 5.500t-12-5.500z" fill="url(#gy)" />
    <path d="m2421 950 56 32-3.500 6-56-32z" fill="#b80000" />
    <path d="M2498.700 998 2481 974.500q-6 2-9.500 9.500t-.5 13z" fill="url(#gx)" />
    <path d="m2405 950-56 32 3.500 6 56-32z" fill="#0000d0" />
    <path d="M2328.500 998 2346 974.500q6 2 9.500 9.500t.5 13z" fill="url(#gz)" />
    <circle cx="2413" cy="949" r="12" fill="url(#gs)" />
    <text x="2413" y="836" fill="#0a9a0a">Y</text><text x="2510.500" y="1006" fill="#e00000">X</text><text x="2314" y="1006" fill="#0000e0">Z</text>
  </g>
);
const Ruler = () => (
  <g shapeRendering="crispEdges" textAnchor="middle">
    <path d="M1189.500 1021.500h505v17h-505z" fill="#fff" stroke="#000" />
    <path d="M1189 1021h127v18h-127zM1441 1021h127v18h-127z" fill="#000" />
    <text x="1188.500" y="1018">0.00</text><text x="1441" y="1018">100.00</text><text x="1678" y="1018" textAnchor="start">200.00 (mm)</text>
    <text x="1314.500" y="1060">50.00</text><text x="1568" y="1060">150.00</text>
  </g>
);
const Flags = () => (
  <g fill="#fff">
    <path d="M657 307h33l6 9-6 8.500h-33z" fill="#0000ff" stroke="#000" /><text x="660" y="320">Min</text>
    <path d="M1189.500 678h36l7 9-7 8.500h-36z" fill="#ff0000" stroke="#300" /><text x="1193" y="691.500">Max</text>
  </g>
);

/* ---------- bottom panels ---------- */
const BottomRow = styled.div`flex: 1; min-height: 0; display: grid; grid-template-columns: 1265px 961px; column-gap: 4px;`;
const Dock = styled.section`display: flex; flex-direction: column; min-height: 0; background: #a0a0a0;`;
const MsgHead = styled.div`display: grid; grid-template-columns: 50px 465px 305px 219px; height: 15px; color: #000;`;
const HeadCell = styled.div`background: #f0f0f0; border-right: 1px solid #696969; border-bottom: 1px solid #696969; box-shadow: inset 1px 1px #fff; line-height: 15px; padding-left: 3px; overflow: hidden;`;
const DockTabs = styled.div`height: 19px; flex: none; margin-top: auto; background: #eeeef2; display: flex; border-top: 1px solid #cccedb; font-size: 12px; letter-spacing: -0.42px;`;
const DockTab = styled.div`padding: 0 4px 0 6px; line-height: 17px; color: ${p => (p.$on ? "#0e70c0" : "#444")}; ${p => p.$on && css`background: #f8f8f8; border-right: 1px solid #cccedb; margin-top: -1px; line-height: 19px;`}`;
const TabGrid = styled.div`display: grid; grid-template-columns: 15px 47px 103px 104px 96px; grid-template-rows: 18px 15px; color: #000; letter-spacing: -0.36px; width: max-content;`;
const TH = styled.div`background: #f4f4f4; border-right: 1px solid #696969; border-bottom: 1px solid #696969; display: flex; align-items: center; gap: 5px; padding-left: 3px; color: ${p => p.$c || "#000"}; font-size: 11px; letter-spacing: ${p => (p.$c ? "-0.58px" : "-0.3px")};`;
const TD = styled.div`background: ${p => (p.$h ? "#f0f0f0" : "#e8e7e3")}; border-right: 1px solid #b0b0b0; border-bottom: 1px solid #b0b0b0; line-height: 15px; padding-left: 3px; overflow: hidden;`;
const HeadCheck = styled.span`width: 14px; height: 14px; background: #fff; border: 1px solid #888; display: flex; align-items: center; justify-content: center;`;
const SERIES = [["Minimum [mm]", "#c8001e"], ["Maximum [mm]", "#1a8a1a"], ["Average [mm]", "#0000d0"]];
const LEVELS = ["0.40854", "0.35747", "0.3064", "0.25534", "0.20427", "0.1532", "0.10213", "0.051067"];

const InsetPanel = ({ x, y, h, pt, indent, selected, l, g, rows, gap }) => (
  <Inset $x={x} $y={y} $h={h} $pt={pt}>
    <TreeBox $h={176}>
      <Rows $l={indent}><ClippedRow />{ANALYSIS.map((d, i) => <Row key={i} d={d} sel={d[2] === selected} />)}</Rows>
      <Scroll><ScrollThumb $h={159} /><ScrollArrow><Chev /></ScrollArrow></Scroll>
    </TreeBox>
    <Gap />
    <PanelHeader title={`Details of "${selected}"`} l={l} h={21} />
    <Details g={g} n={104} rows={rows} gap={gap} />
  </Inset>
);

export default function App() {
  return (
    <Window>
      <Global />
      <TitleBar>
        <TabsSide>
          <QuickRow>
            <AppLogo>M</AppLogo><VLine $h={23} $m="0 6px 0 0" />
            <QuickItems><Icon n="save" s={15} /><Caret $c="#444" $m="2px 0 0 5px" /></QuickItems>
            <ContextTab>Context</ContextTab>
          </QuickRow>
          <TabRow>
            <Tab $w={52} $file>File</Tab><Tab $w={67} $l={5}>Home</Tab><Tab $w={59} $on>Result</Tab>
            <Tab $w={68}>Display</Tab><Tab $w={73}>Selection</Tab><Tab $w={92}>Automation</Tab>
          </TabRow>
        </TabsSide>
        <Title>C : Static Structural - Mechanical [Ansys Mechanical Enterprise]</Title>
        <WinSide>
          <WinButtons><Icon n="minus" s={14} /><Icon n="restore" s={13} /><Icon n="close" s={13} /></WinButtons>
          <QuickLaunch>
            <SearchBox $w={161} $h={21}>Quick Launch</SearchBox><Icon n="chevUp" s={14} />
            <RightIcons><Icon n="clipCheck" s={15} /><Icon n="help" s={14} /><Caret $c="#222" $m="0 0 0 -7px" /></RightIcons>
          </QuickLaunch>
        </WinSide>
      </TitleBar>
      <Ribbon />
      <Workspace>
        <SideColumn>
          <PanelHeader title="Outline" active />
          <FilterBar>
            <Grip $m="0 7px 0 0" />
            <Select $w={100} $h={23}>Name<Caret /></Select>
            <SearchBox $w={90} $h={23}>Search Outline</SearchBox>
            <FilterEnd><Icon n="chevDown" s={14} /><Caret $c="#111" $m="8px 0 0 6px" /></FilterEnd>
          </FilterBar>
          <TreeBox $h={301}>
            <Rows>{MODEL.map((d, i) => <Row key={i} d={d} sel={d[2] === "Total Deformation"} />)}</Rows>
            <Scroll><ScrollArrow $mb={14}><Chev up /></ScrollArrow><ScrollThumb $h={253} /><ScrollArrow><Chev /></ScrollArrow></Scroll>
          </TreeBox>
          <Gap />
          <PanelHeader title={'Details of "Total Deformation"'} h={21} />
          <Details g={10} n={121} rows={MAIN_ROWS} />
        </SideColumn>
        <MainColumn>
          <Tools />
          <Viewport>
            <Scene width="2230" height="920" viewBox="328 163 2230 920"><Model /><Flags /><Ruler /><Triad /></Scene>
            <Caption>
              <b>C: Static Structural</b><br />Total Deformation<br />Type: Total Deformation<br />Unit: mm<br />Time: 1<br />10/19/2024 10:50 PM
            </Caption>
            <Legend>
              <Swatches>{[...SCALE].reverse().map(c => <Swatch key={c} $c={c} />)}</Swatches>
              <LegendLabels><b>0.45961 Max</b>{LEVELS.map(v => <span key={v}>{v}</span>)}<b>0 Min</b></LegendLabels>
            </Legend>
            <Brand><BrandName>ANSYS</BrandName><BrandVersion>2020 <b>R2</b></BrandVersion></Brand>
            <InsetPanel x={1184} y={78} h={416} indent={4} selected="Nodal Displacement" l={5} g={14} rows={DISP_ROWS} />
            <InsetPanel x={1582} y={70} h={424} pt={4} indent={5} selected="Nodal Rotation" l={6} g={15} rows={ROT_ROWS} gap={8} />
          </Viewport>
          <Gap />
          <BottomRow>
            <Dock>
              <PanelHeader title="Messages" l={5} />
              <MsgHead><HeadCell /><HeadCell>Text</HeadCell><HeadCell>Association</HeadCell><HeadCell>Timestamp</HeadCell></MsgHead>
              <DockTabs><DockTab $on>Messages</DockTab><DockTab>Graph</DockTab></DockTabs>
            </Dock>
            <Dock>
              <PanelHeader title="Tabular Data" l={5} />
              <TabGrid>
                <TH /><TH>Time [s]</TH>
                {SERIES.map(([t, c]) => <TH key={t} $c={c}><HeadCheck><Tick /></HeadCheck>{t}</TH>)}
                <TD $h>1</TD><TD>1.</TD><TD>0.</TD><TD>0.45961</TD><TD>0.1532</TD>
              </TabGrid>
            </Dock>
          </BottomRow>
        </MainColumn>
      </Workspace>
    </Window>
  );
}
